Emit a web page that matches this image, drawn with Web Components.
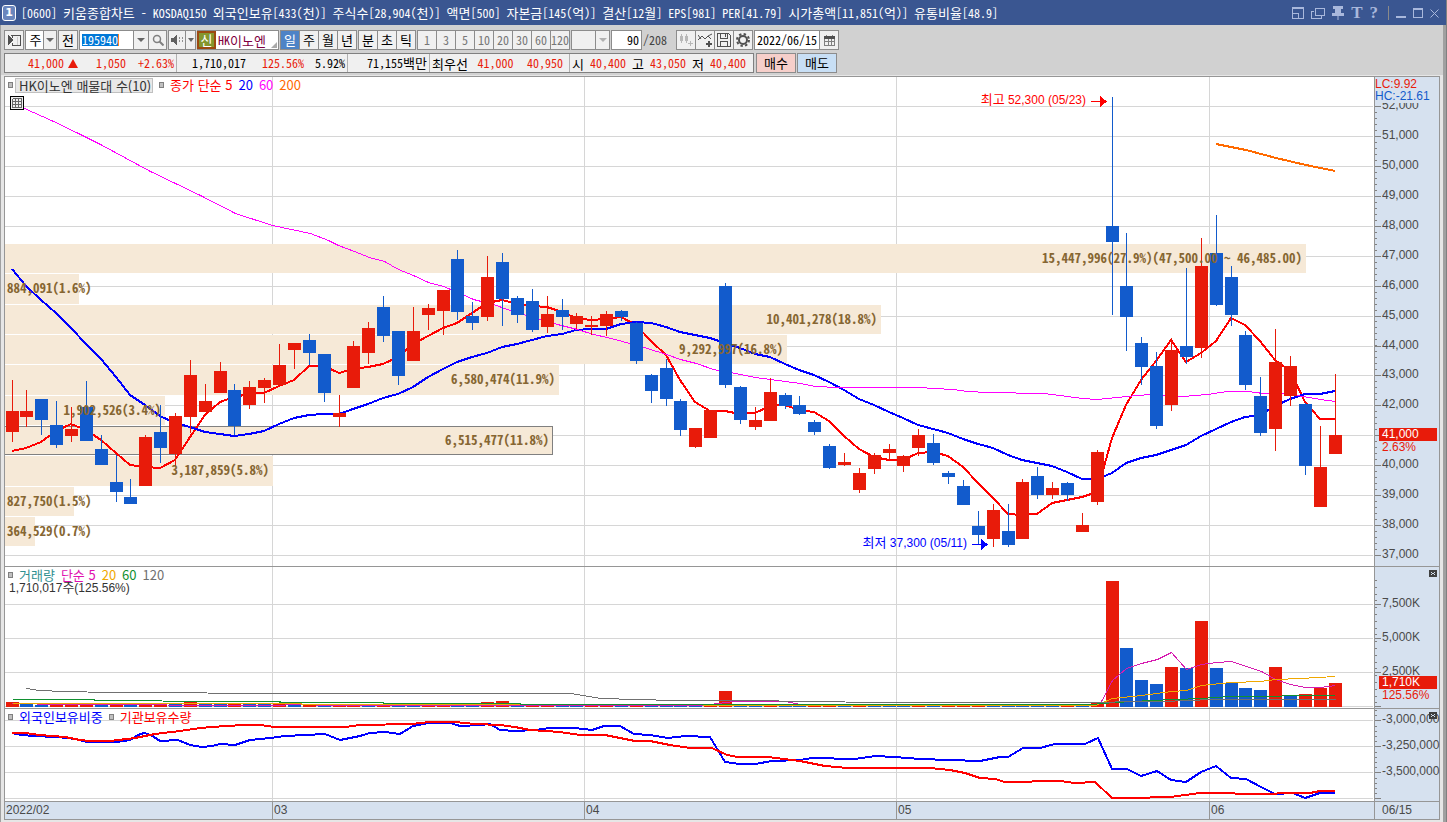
<!DOCTYPE html>
<html lang="ko">
<head>
<meta charset="utf-8">
<title>키움종합차트</title>
<style>
html, body { margin: 0; height: 100%; }
body {
  --mono: "Noto Sans Mono CJK KR", "Liberation Mono", "Noto Sans CJK KR", monospace;
  --sans: "Liberation Sans", "Noto Sans CJK KR", sans-serif;
  --kr: "Noto Sans CJK KR", "Liberation Sans", sans-serif;
  --up: #e81b0a;
  --down: #125bcc;
  --edge: #969696;
  --axis: #d6e1ef;
  font: 12px/16px var(--mono);
  color: #000;
  background: #d1d1d1;
}
</style>
</head>
<body>
<chart-window></chart-window>
<script>
const define = (name, html, setup) => {
  const tpl = document.createElement('template');
  tpl.innerHTML = html;
  customElements.define(name, class extends HTMLElement {
    constructor() {
      super();
      this.attachShadow({ mode: 'open' }).append(tpl.content.cloneNode(true));
    }
    connectedCallback() {
      if (this.ready) return;
      this.ready = true;
      if (setup) setup(this, this.shadowRoot);
    }
  });
};

/* Hangul runs are set one size above the Latin text beside them. */
const mixed = text => text.replace(/[가-힣]+/g, '<span class="ko">$&</span>');
const KO = '.ko { font-family: var(--kr); font-size: 13px; line-height: 1px; }';

/* ---------- chart data, in plot units ---------- */
const candles = `r380,411,432,442 r390,411,417,427 b399,399,420,435 b401,425,445,448 r407,429,436,442 b381,407,441,441
b435,449,465,465 b455,482,492,502 b479,497,504,504 r435,437,486,486 b405,432,448,463 r413,416,454,466 r360,375,417,433
r384,401,412,412 r362,371,393,393 b384,390,426,435 r381,387,405,409 r378,380,388,403 r344,365,385,385 r343,343,350,369
b334,340,353,365 b354,354,393,402 r395,413,417,427 r341,346,388,388 r322,328,353,364 b296,307,336,342 b331,331,376,385
r307,331,361,361 r304,308,315,330 r290,290,311,335 b250,259,312,320 b302,316,323,330 r256,277,317,321 b253,262,299,326
b296,298,315,323 b289,301,330,332 r296,314,327,333 b299,310,317,330 r313,316,324,329 r316,325,327,335 r311,314,326,336
b310,311,317,321 b322,323,361,364 b374,375,391,403 b359,368,399,406 b399,401,430,436 r428,428,447,448 r410,410,438,438
b283,286,385,388 b386,387,420,424 r407,420,427,430 r378,392,421,421 b393,395,406,409 b396,405,414,415 b420,422,432,435
b444,446,468,469 r453,462,465,466 r468,473,490,493 r453,455,469,474 r444,449,453,460 r455,456,466,472 r429,435,448,456
b434,443,463,465 b471,473,477,484 b480,486,505,505 b511,526,535,545 r504,510,539,547 b504,531,545,547 r479,482,539,539
b467,476,495,499 r482,488,495,499 b482,483,495,501 r513,525,532,532 r450,452,502,505 b97,226,242,315 b233,286,317,351
b337,343,367,385 b352,366,426,429 r338,350,405,411 b268,346,357,364 r238,266,348,358 b215,253,305,306 b266,277,315,326
b331,335,385,390 b377,396,433,436 r329,362,429,451 r356,366,396,406 b403,404,466,475 r426,467,507,507 r374,435,454,454`
  .split(/\s+/).map(s => [s[0], ...s.slice(1).split(',').map(Number)]);

const ma5 = [451,448,442,431,424,430,440,453,465,467,468,460,437,415,402,397,394,393,386,380,366,366,373,369,367,364,357,344,336,328,323,313,303,300,304,306,307,312,318,320,319,317,325,341,355,380,402,411,411,414,413,406,405,410,412,421,436,449,457,460,460,453,452,456,467,483,498,514,515,514,503,500,497,492,438,405,380,361,340,362,353,341,318,325,341,360,371,402,419,419];
const ma20 = [269,286,300,313,328,344,359,377,395,405,416,423,427,432,434,436,434,431,424,418,415,414,414,409,404,398,394,387,377,369,362,357,353,347,344,340,336,334,330,329,329,324,322,323,327,332,335,338,343,348,354,357,364,370,375,382,390,399,405,412,418,425,429,433,439,444,448,455,460,463,466,472,479,479,473,463,458,455,450,445,436,429,422,417,415,406,399,394,394,391];
const ma60 = '12,103 24,108 51,120 80,134 100,144 150,171 200,195 235,213 272,225 310,233 328,240 338,245 354,251 369,257 384,261 398,269 413,275 428,282 443,286 460,293 473,299 493,304 507,309 523,314 540,319 557,324 577,329 593,334 607,337 622,341 637,345 663,353 680,359 696,363 713,369 730,372 755,377 770,379 800,383 815,386 837,387 920,387 933,388 953,389 967,391 987,392 1043,393 1067,396 1082,398 1097,399 1126,396 1150,394 1183,396 1207,394 1227,391 1247,391 1263,393 1283,393 1303,396 1320,399 1335,401';
const ma200 = '1216,144 1231,147 1246,150 1276,158 1306,165 1335,171';

/* right edge, top, bottom, label, label side */
const bands = [
  [1306,244,273,'15,447,996(27.9%)(47,500.00 ~ 46,485.00)'], [79,274,304,'884,091(1.6%)',1],
  [881,305,334,'10,401,278(18.8%)'], [787,335,364,'9,292,997(16.8%)'], [559,365,395,'6,580,474(11.9%)'],
  [165,396,425,'1,902,526(3.4%)'], [553,426,455,'6,515,477(11.8%)'], [273,456,486,'3,187,859(5.8%)'],
  [74,487,516,'827,750(1.5%)',1], [35,517,546,'364,529(0.7%)',1]];

const volColor = 'rbbrrrbrbrrbrbbrbbrbrbrrbrbbrrbbrrbrrbbrrbrbbbbrrbbrbbrrbrbbbrbrrrbbbbbrbrrbbbrbrbbbbrbrrr';
const volTop = { 0:702, 2:705, 12:702, 32:702, 33:701, 48:691, 49:704, 50:704, 51:704, 73:703, 74:581, 75:648, 76:680, 77:684, 78:667, 79:668, 80:621, 81:668, 82:683, 83:688, 84:690, 85:667, 86:695, 87:694, 88:688, 89:683 };
const volLines = [
  ['#d61cb0','12,703 60,704 270,705 300,704 330,705 700,705 718,703 733,701 785,701 800,704 880,705 1085,705 1100,703 1112,680 1126,668 1141,663 1157,659 1171,652 1186,669 1201,664 1216,662 1231,661 1246,666 1261,671 1275,679 1290,684 1305,687 1320,687 1335,685'],
  ['#f0a800','12,703 300,703 302,704 1095,705 1112,698 1141,695 1171,691 1186,690 1201,685 1231,682 1260,681 1275,679 1300,678 1335,676'],
  ['#109030','12,699 93,699 95,700 228,701 330,702 436,703 600,704 1090,704 1115,702 1150,700 1200,698 1230,696 1335,695'],
  ['#707070','26,688 38,690 64,691 109,692 302,693 570,693 600,698 674,700 778,700 779,701 910,702 1100,702 1130,701 1160,701 1190,700 1210,699 1335,699']];
const foreignLine = '12,733 22,735 33,736 57,737 75,739 87,742 117,742 130,740 138,735 144,733 151,735 160,741 178,740 190,745 202,747 212,746 220,744 235,745 250,740 270,738 285,736 325,734 340,740 360,736 370,733 385,732 400,734 413,726 428,723 450,723 460,726 480,725 490,724 500,730 515,731 535,730 550,728 575,728 592,730 604,726 620,726 634,734 650,735 668,738 685,736 710,737 725,762 740,764 755,764 772,761 800,760 812,758 855,759 875,756 895,757 920,759 950,760 980,761 1000,757 1008,757 1023,748 1040,748 1055,744 1085,744 1098,738 1112,769 1127,769 1141,776 1157,771 1171,780 1186,782 1201,772 1216,766 1231,778 1246,779 1261,787 1275,794 1293,793 1305,798 1320,793 1335,793';
const instLine = '12,733 25,733 40,735 65,737 80,740 90,741 110,741 135,738 155,734 180,731 200,728 225,726 245,725 260,725 275,727 345,727 360,725 412,724 430,722 455,722 475,724 500,725 515,727 530,730 560,732 580,735 605,735 620,738 635,741 650,741 670,745 690,748 712,748 727,755 738,757 768,757 800,761 825,766 848,768 930,768 950,770 965,773 980,778 995,779 1005,782 1060,781 1075,783 1095,782 1112,798 1130,798 1170,797 1200,793 1225,793 1245,794 1310,793 1320,791 1335,791';

/* ---------- drawing helpers ---------- */
const LEFT = 5, WIDE = 1369, months = [272, 584, 896, 1209];
const cx = i => Math.floor(12 + 14.866 * i);
const rect = (x, y, w, h, fill, extra = '') => `<rect x="${x}" y="${y}" width="${w}" height="${h}" fill="${fill}" ${extra}/>`;
const line = (pts, color, w) => `<polyline points="${pts}" fill="none" stroke="${color}" stroke-width="${w}" vector-effect="non-scaling-stroke" transform="translate(${w % 2 / 2} ${w % 2 / 2})"/>`;
const series = a => a.map((y, i) => cx(i) + ',' + y).join(' ');
const grid = (rows, top, h) => rows.map(y => rect(LEFT, y, WIDE - 1, 1, '#d6d6d6')).join('') + months.map(x => rect(x, top, 1, h, '#d6d6d6')).join('');
const priceRows = [106,136,166,196,226,256,286,316,346,375,405,435,465,495,525,555];

const panes = {
  price: { top: 77, h: 489, draw() {
    let s = grid(priceRows, 77, 489);
    for (const [r, t, b] of bands) s += rect(LEFT, t, r - LEFT, b - t, '#f6e9d7');
    s += rect(LEFT, 426, 548, 1, '#808080') + rect(LEFT, 454, 548, 1, '#808080') + rect(552, 426, 1, 29, '#808080');
    s += line(series(ma5), '#f00', 2) + line(series(ma20), '#00f', 2) + line(ma60, '#f0f', 1) + line(ma200, '#ff6a00', 2);
    candles.forEach(([c, hi, t, b, lo], i) => {
      const f = c === 'r' ? 'var(--up)' : 'var(--down)';
      s += rect(cx(i), hi, 1, lo - hi, f) + rect(cx(i) - 6, t, 13, b - t, f);
    });
    s += '<path d="M1091 101h9v-5l7 5.500-7 5.500v-5h-9z" fill="#f00"/><path d="M972 544h9v-5l7 5.500-7 5.500v-5h-9z" fill="#00f"/>';
    return s;
  }, labels() {
    return bands.map(([r, t, b, text, side]) => side
      ? { text, x: 7, y: (t + b) / 2, cls: 'band' } : { text, x: r - 4, y: (t + b) / 2, cls: 'band end' })
      .concat({ text: '최고 52,300 (05/23)', x: 1086, y: 101, cls: 'end hi' }, { text: '최저 37,300 (05/11)', x: 967, y: 544, cls: 'end lo' });
  } },
  volume: { top: 567, h: 141, draw() {
    let s = grid([604, 638, 672, 706], 567, 141);
    [...volColor].forEach((c, i) => { const t = volTop[i] || (i < 30 ? 704 : 705); s += rect(cx(i) - 6, t, 13, 707 - t, c === 'r' ? 'var(--up)' : 'var(--down)'); });
    return s + volLines.map(([c, p]) => line(p, c, 1)).join('');
  }, labels: () => [] },
  holding: { top: 709, h: 92, draw() {
    return grid([720, 746, 772, 798], 709, 92) + line(foreignLine, '#00f', 2) + line(instLine, '#f00', 2);
  }, labels: () => [] }
};

const addLabels = (root, list, left, wide, top, high) => list.forEach(l => {
  const el = document.createElement('span');
  el.className = 'label ' + (l.cls || '');
  el.innerHTML = mixed(l.text);
  if (/\bend\b/.test(l.cls)) el.style.right = (left + wide - l.x) / wide * 100 + '%';
  else el.style.left = (l.x - left) / wide * 100 + '%';
  el.style.top = (l.y - top) / high * 100 + '%';
  root.append(el);
});

define('plot-pane', `<style>
:host { display: block; position: relative; min-width: 0; min-height: 0; background: #fff; font: 12px/14px var(--sans); }
svg { position: absolute; inset: 0; width: 100%; height: 100%; }
.legend { position: relative; z-index: 1; padding: 1px 3px; }
.label { position: absolute; margin-top: -8px; white-space: pre; }
.band { font: bold 13px/14px var(--mono); color: #866632; }
.hi { color: #f00; } .lo { color: #00f; }
${KO}
</style><svg preserveAspectRatio="none" shape-rendering="crispEdges" aria-hidden="true"></svg><div class="legend"><slot></slot></div>`,
(host, root) => {
  const p = panes[host.getAttribute('kind')], svg = root.querySelector('svg');
  svg.setAttribute('viewBox', `${LEFT} ${p.top} ${WIDE} ${p.h}`);
  svg.innerHTML = p.draw();
  addLabels(root, p.labels(), LEFT, WIDE, p.top, p.h);
});

define('legend-row', `<style>
:host { display: flex; align-items: center; height: 14px; gap: 6px; white-space: pre; font: 13px/14px var(--kr); }
</style><slot></slot>`);
define('legend-mark', `<style>
:host { display: block; box-sizing: border-box; width: 5px; height: 6px; border: 1px solid #808080; background: #c0c0c0; }
</style>`);

const ramp = (from, to, step) => { const a = []; for (let y = from; y <= to; y += step) a.push(Math.round(y)); return a; };
const axes = {
  price: { top: 77, h: 489, major: priceRows, minor: ramp(106, 560, 29.93 / 5),
    labels: priceRows.map((y, i) => ({ text: (52 - i) + ',000', x: 1382, y })).concat(
      { text: 'LC:9.92', x: 1375, y: 85, cls: 'cover up' }, { text: 'HC:-21.61', x: 1375, y: 97, cls: 'cover down' },
      { text: '41,000', x: 1379, y: 436, cls: 'now' }, { text: '2.63%', x: 1382, y: 448, cls: 'up' }) },
  volume: { top: 567, h: 141, major: [604, 638, 672, 706], minor: ramp(580, 706, 6.8), close: 3,
    labels: [{ text: '7,500K', x: 1382, y: 604 }, { text: '5,000K', x: 1382, y: 638 }, { text: '2,500K', x: 1382, y: 672 },
      { text: '1,710K', x: 1379, y: 684, cls: 'now' }, { text: '125.56%', x: 1382, y: 696, cls: 'up' }] },
  holding: { top: 709, h: 92, major: [720, 746, 772, 798], minor: ramp(710, 798, 5.2), close: 3,
    labels: [{ text: '-3,000,000', x: 1382, y: 720 }, { text: '-3,250,000', x: 1382, y: 746 }, { text: '-3,500,000', x: 1382, y: 772 }] }
};
define('value-axis', `<style>
:host { display: block; position: relative; background: var(--axis); font: 12px/14px var(--sans); color: #4a4a4a; }
svg.ticks { position: absolute; inset: 0; width: 100%; height: 100%; }
.label { position: absolute; margin-top: -8px; white-space: pre; }
.up { color: var(--up); } .down { color: var(--down); }
.cover { background: var(--axis); }
.now { box-sizing: border-box; width: 58px; padding-left: 3px; line-height: 13px; color: #fff; background: var(--up); }
button { position: absolute; top: 3px; right: 2px; width: 8px; height: 7px; padding: 0; border: 0; background: #404040; display: flex; }
</style><svg class="ticks" preserveAspectRatio="none" shape-rendering="crispEdges" aria-hidden="true"></svg>`,
(host, root) => {
  const a = axes[host.getAttribute('kind')], svg = root.querySelector('svg');
  svg.setAttribute('viewBox', `1375 ${a.top} 64 ${a.h}`);
  svg.innerHTML = a.minor.map(y => rect(1375, y, 2, 1, '#808080')).join('') + a.major.map(y => rect(1375, y, 6, 1, '#808080')).join('');
  addLabels(root, a.labels, 1375, 64, a.top, a.h);
  if (a.close) root.append(Object.assign(document.createElement('button'), {
    ariaLabel: '닫기', innerHTML: '<svg width="8" height="7" viewBox="0 0 8 7" shape-rendering="crispEdges"><path d="M2 2h1v1h2v-1h1v1h-1v1h1v1h-1v-1h-2v1h-1v-1h1v-1h-1z" fill="#d6e1ef"/></svg>' }));
});

define('date-axis', `<style>
:host { display: block; position: relative; background: var(--axis); font: 12px/14px var(--sans); color: #4a4a4a; }
.label { position: absolute; margin-top: -8px; padding-left: 1px; white-space: pre; }
.month::before { content: ""; position: absolute; left: -1px; top: -1px; height: 17px; border-left: 1px solid var(--edge); }
</style>`, (host, root) => addLabels(root,
  [['2022/02', 5], ['03', 273], ['04', 585], ['05', 897], ['06', 1210]].map(([text, x], i) => ({ text, x, y: 811, cls: i ? 'month' : '' })), LEFT, WIDE, 802, 17));

define('chart-board', `<style>
:host { display: grid; grid-template-columns: minmax(0, 1fr) 64px; grid-template-rows: minmax(0, 489fr) minmax(0, 141fr) minmax(0, 92fr) 17px; gap: 1px; padding: 1px; background: var(--edge); min-height: 0; }
button { font: inherit; padding: 0 1px 0 3px; height: 15px; border: 1px solid #c0c0c0; background: #e8e8e8; color: #333; white-space: pre; margin-left: -4px; }
.tool { display: flex; width: 14px; height: 14px; margin: 4px 0 0 2px; padding: 0; border: 0; background: none; }
.last { padding: 1px 7px 0; background: var(--axis); font: 12px/14px var(--sans); color: #4a4a4a; }
.sum { padding-left: 1px; color: #333; line-height: 13px; }
${KO}
</style>
<plot-pane kind="price">
  <legend-row><legend-mark></legend-mark><button>HK이노엔 매물대 수(10)</button><legend-mark></legend-mark><span style="color:#f00">종가 단순 5</span><span style="color:#00f">20</span><span style="color:#f0f">60</span><span style="color:#ff6a00">200</span></legend-row>
  <button class="tool" aria-label="표 보기"><svg width="14" height="14" viewBox="0 0 14 14" shape-rendering="crispEdges"><path fill="#000" d="M0 0h14v14H0z"/><path fill="#eee" d="M1 1h12v12H1z"/><path fill="none" stroke="#666" d="M3 2.500h8.500v9H2.500v-9M2.500 5.500h9M2.500 8.500h9M5.500 2.500v9M8.500 2.500v9"/></svg></button>
</plot-pane>
<value-axis kind="price"></value-axis>
<plot-pane kind="volume">
  <legend-row><legend-mark></legend-mark><span style="color:#2f9090">거래량</span><span style="color:#e010b0">단순 5</span><span style="color:#f0a800">20</span><span style="color:#109030">60</span><span style="color:#707070">120</span></legend-row>
  <div class="sum">1,710,017<span class="ko">주</span>(125.56%)</div>
</plot-pane>
<value-axis kind="volume"></value-axis>
<plot-pane kind="holding">
  <legend-row><legend-mark></legend-mark><span style="color:#00f">외국인보유비중</span><legend-mark></legend-mark><span style="color:#f00">기관보유수량</span></legend-row>
</plot-pane>
<value-axis kind="holding"></value-axis>
<date-axis></date-axis>
<div class="last">06/15</div>`);

define('title-bar', `<style>
:host { display: flex; align-items: center; height: 25px; box-sizing: border-box; padding: 0 7px 0 2px; gap: 5px; background: #3a5691; color: #fff; }
.no { box-sizing: border-box; width: 14px; height: 16px; border: 1px solid #fff; border-radius: 3px; background: #6a86bd; font: bold 11px/14px "DejaVu Sans", sans-serif; text-align: center; }
h1 { flex: 1; min-width: 0; margin: 0; font: inherit; white-space: pre; }
.acts { display: flex; align-items: center; gap: 7px; }
button { display: flex; padding: 0; border: 0; background: none; color: #a9b8dc; font: bold 17px/18px "Liberation Serif", serif; }
svg { display: block; fill: none; stroke: currentColor; }
i { width: 1px; height: 14px; margin-left: 3px; background: #8a8a8a; }
${KO}
</style>
<span class="no">1</span><h1>${mixed('[0600] 키움종합차트 - KOSDAQ150 외국인보유[433(천)] 주식수[28,904(천)] 액면[500] 자본금[145(억)] 결산[12월] EPS[981] PER[41.79] 시가총액[11,851(억)] 유통비율[48.9]')}</h1>
<div class="acts">
<button aria-label="도킹"><svg width="12" height="12" shape-rendering="crispEdges"><path d="M.5 1.500h11v10H.5zM.5 6.500h6v5"/><path d="M0 1h12" stroke-width="2"/></svg></button>
<button aria-label="복제"><svg width="14" height="12" shape-rendering="crispEdges"><path d="M4.500 1h9v7h-9zM.5 4v7.500H10V9M4 1.500h10M0 4.500h3"/></svg></button>
<button aria-label="고정"><svg width="12" height="14"><path fill="currentColor" stroke="none" d="M1 0h10v3H9v4h3v3H6.500v4h-1v-4H0V7h3V3H1z"/></svg></button>
<button aria-label="글꼴">T</button>
<button aria-label="도움말">?</button>
<i></i>
<button aria-label="최소화"><svg width="10" height="12"><path d="M0 10h10" stroke-width="2"/></svg></button>
<button aria-label="최대화"><svg width="10" height="12" shape-rendering="crispEdges"><path d="M.5 1.500h9v9h-9zM0 2.500h10"/></svg></button>
<button aria-label="닫기"><svg width="9" height="10"><path d="M.5 1.500l8 8M8.500 1.500l-8 8"/></svg></button>
</div>`);

define('tool-bar', `<style>
:host { display: flex; gap: 1px; height: 20px; padding: 5px 4px 3px; white-space: nowrap; }
* { box-sizing: border-box; }
.g { display: flex; border: 1px solid #8c8c8c; border-left: 0; background: #f0f0f0; position: relative; }
.g > * { width: 19px; height: 18px; margin: 0; padding: 0; border: 0; border-left: 1px solid #8c8c8c; border-radius: 0; background: none; color: #000; font: 13px/18px var(--kr); text-align: center; display: flex; align-items: center; justify-content: center; outline: 0; }
.g > input, .g > select { background: #fff; display: block; appearance: none; }
.g > .on { background: #4d83c6; color: #fff; }
.mins > * { color: #777; font: 12px/18px var(--mono); }
.g > .code { width: 54px; padding-left: 2px; text-align: left; color: #fff; font: 12px/18px var(--mono);
  background: linear-gradient(#ff8020, #ff8020) 38px 3px / 1px 12px no-repeat, linear-gradient(#0078d7, #0078d7) 2px 3px / 36px 12px no-repeat, #fff; }
.g > .sign { width: 19px; border: 2px solid #9c4a10; background: #84962e; color: #fff; }
.g > .name { position: relative; width: 62px; border: 0; padding-left: 2px; justify-content: flex-start; background: #fff; color: #800040; font: 12px/18px var(--mono); }
.name::after { content: ""; position: absolute; right: 1px; bottom: 1px; border: 3px solid; border-color: transparent #aaa #aaa transparent; }
.arr::after { content: ""; border: 4px solid transparent; border-top: 4px solid #666; border-bottom: 0; }
.small::after { border-width: 4px 3px 0; }
.dim { color: #aaa; } .dim.arr::after { border-top-color: #b0b0b0; }
.g > .num { width: 30px; padding-right: 2px; text-align: right; font: 12px/18px var(--mono); }
.g > .date { width: 65px; padding-left: 2px; text-align: left; font: 12px/18px var(--mono); }
.total { font: 12px/20px var(--mono); color: #444; width: 32px; }
svg { display: block; flex: none; fill: none; stroke: #505050; }
${KO}
</style>
<div class="g"><button aria-label="패널"><svg width="13" height="12" shape-rendering="crispEdges"><path d="M4 1.500h8.500v10H4M3 1.500h9" /><path d="M4.500 1v3M4.500 9v3" /><path d="M0 1l5 5-5 5z" fill="#505050" stroke="none"/><path d="M9.500 3v8" stroke="#ccc"/></svg></button></div>
<div class="g"><select aria-label="구분" style="width:18px;padding-left:2px"><option>주</option></select><button class="arr" aria-label="구분 목록" style="width:13px"></button></div>
<div class="g"><button>전</button></div>
<div class="g"><input class="code" aria-label="종목코드" value="195940"><button class="arr" aria-label="종목 목록" style="width:15px"></button><button aria-label="검색" style="width:18px"><svg width="12" height="12"><circle cx="5" cy="5" r="3.500" stroke="#808080" stroke-width="1.500"/><path d="M7.500 7.500l4 4" stroke="#808080" stroke-width="2"/></svg></button></div>
<div class="g"><button aria-label="소리" style="width:17px"><svg width="13" height="12" shape-rendering="crispEdges"><path d="M0 4h2l4-4v12l-4-4H0z" fill="#606060" stroke="none"/><path d="M8.500 3v2M11.500 3v2M8.500 6v2M11.500 6v2" stroke="#909090"/></svg></button><button class="arr small" aria-label="소리 목록" style="width:10px"></button></div>
<div class="g"><span class="sign">신</span><span class="name">HK<span class="ko">이노엔</span></span></div>
<div class="g"><button class="on">일</button><button>주</button><button>월</button><button>년</button></div>
<div class="g"><button>분</button><button>초</button><button>틱</button></div>
<div class="g mins"><button>1</button><button>3</button><button>5</button><button>10</button><button>20</button><button>30</button><button>60</button><button>120</button></div>
<div class="g"><select class="dim" aria-label="주기" style="width:24px;background:#f0f0f0"><option></option></select><button class="arr dim" aria-label="주기 목록" style="width:14px"></button></div>
<div class="g"><input class="num" aria-label="조회 개수" value="90"></div><span class="total">/208</span>
<div class="g"><button aria-label="봉 추가"><svg width="15" height="14" shape-rendering="crispEdges"><path d="M1 3h3v5H1zM6 3h3v5H6zM2 1h1v9H2zM7 1h1v9H7zM9 10h5v1H9zM11 8h1v5h-1z" fill="#b8b8b8" stroke="none"/></svg></button><button aria-label="지표 추가"><svg width="15" height="14"><path d="M0 7l4-4 3 3 3-3 4-2M0 2l3 4M7 6l3-3 3 3" /><path d="M8 11h6M11 8v6" stroke-width="2"/></svg></button><button aria-label="저장"><svg width="14" height="14" shape-rendering="crispEdges"><path d="M.5 .5h11l2 2v11H.5zM3.500 .5v5h7v-5M3.500 13.500v-5h7v5" stroke-width="1"/><path d="M8 1v3"/></svg></button><button aria-label="설정"><svg width="14" height="14"><circle cx="7" cy="7" r="4" stroke-width="2"/><circle cx="7" cy="7" r="6" stroke-width="2" stroke-dasharray="2.400 2.300"/></svg></button></div>
<div class="g"><input class="date" aria-label="조회일" value="2022/06/15"><button aria-label="달력"><svg width="11" height="11" shape-rendering="crispEdges"><path d="M.5 1.500h10v9H.5zM0 6.500h11M4.500 4v7M7.500 4v7M2.500 0v2M8.500 0v2" stroke="#808080"/><path d="M0 2.500h11" stroke-width="3"/></svg></button></div>`);

define('quote-bar', `<style>
:host { display: flex; height: 20px; padding: 0 4px; white-space: pre; }
* { box-sizing: border-box; }
.box { display: flex; width: 750px; border: 1px solid #808080; background: #f0f0f0; }
.cell { display: flex; justify-content: flex-end; align-items: center; gap: 4px; padding: 0 2px; border-left: 1px solid #b0b0b0; line-height: 18px; }
.cell:first-child { border: 0; }
.cell b { font-weight: normal; text-align: right; }
.r { color: #e81b0a; }
svg { display: block; }
button { width: 40px; margin-left: 2px; padding: 0; border: 1px solid #8c8c8c; font: 13px/16px var(--kr); color: #000; }
button + button { margin-left: 1px; }
.buy { background: #f6cfca; } .sell { background: #c8dff5; }
${KO}
</style>
<div class="box">
<div class="cell r" style="width:171px"><b>41,000</b><svg width="10" height="9"><path d="M5 0l5 9H0z" fill="#e81b0a"/></svg><b style="width:44px">1,050</b><b style="width:44px">+2.63%</b></div>
<div class="cell" style="width:171px"><b>1,710,017</b><b class="r" style="width:54px">125.56%</b><b style="width:37px">5.92%</b></div>
<div class="cell" style="width:82px"><b>71,155<span class="ko">백만</span></b></div>
<div class="cell" style="width:140px;padding-right:6px"><b class="ko">최우선</b><b class="r" style="width:42px">41,000</b><b class="r" style="width:46px">40,950</b></div>
<div class="cell" style="flex:1;padding-right:7px;gap:6px"><b class="ko">시</b><b class="r">40,400</b><b class="ko">고</b><b class="r">43,050</b><b class="ko">저</b><b class="r">40,400</b></div>
</div><button class="buy">매수</button><button class="sell">매도</button>`);

define('chart-window', `<style>
:host { display: flex; flex-direction: column; min-height: 100vh; box-sizing: border-box; border-right: 1px solid #808080; }
.body { flex: 1; display: flex; flex-direction: column; border-left: 1px solid #a0a0a0; border-right: 3px solid #a0a0a0; }
tool-bar { padding-left: 3px; } quote-bar { padding-left: 3px; }
.frame { flex: 1; display: flex; flex-direction: column; margin-top: 2px; padding: 1px 3px 2px 3px; background: #e6e6e6; }
chart-board { flex: 1; }
</style>
<title-bar></title-bar>
<div class="body"><tool-bar></tool-bar><quote-bar></quote-bar><div class="frame"><chart-board></chart-board></div></div>`);
</script>
</body>
</html>
